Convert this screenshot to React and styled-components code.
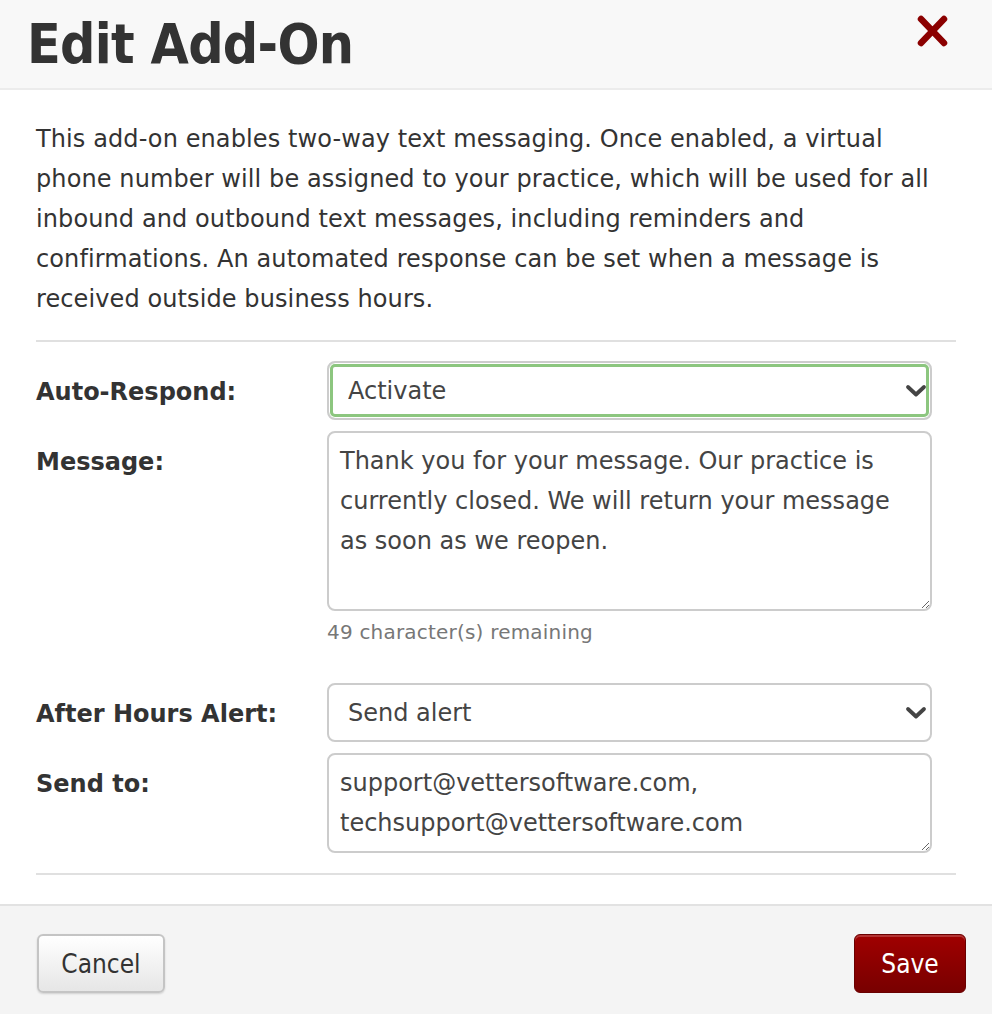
import React from 'react';
import styled, { createGlobalStyle } from 'styled-components';

const GlobalStyle = createGlobalStyle`
  html, body {
    margin: 0;
    padding: 0;
    background: #ffffff;
  }
  body {
    font-family: "DejaVu Sans", Verdana, sans-serif;
    color: #333333;
  }
`;

export default function App() {
  return (
    <>
      <GlobalStyle />
      <Modal>
        <Header>
          <Title>Edit Add-On</Title>
          <CloseButton aria-label="Close">
            <svg width="34" height="34" viewBox="0 0 34 34">
              <path d="M5 5 L28 29 M28 5 L5 29" stroke="#8b0000" strokeWidth="6.5" strokeLinecap="round" />
            </svg>
          </CloseButton>
        </Header>

        <Body>
          <Intro>
            This add-on enables two-way text messaging. Once enabled, a virtual
            phone number will be assigned to your practice, which will be used for all
            inbound and outbound text messages, including reminders and
            confirmations. An automated response can be set when a message is
            received outside business hours.
          </Intro>

          <Divider />

          <Form>
            <Row>
              <Label>Auto-Respond:</Label>
              <Field>
                <Select defaultValue="activate" $focused>
                  <option value="activate">Activate</option>
                  <option value="deactivate">Deactivate</option>
                </Select>
                <Chevron />
              </Field>
            </Row>

            <Row>
              <Label>Message:</Label>
              <Field>
                <TextArea
                  $height={180}
                  defaultValue="Thank you for your message. Our practice is currently closed. We will return your message as soon as we reopen."
                />
                <Hint>49 character(s) remaining</Hint>
              </Field>
            </Row>

            <Row $top={27}>
              <Label>After Hours Alert:</Label>
              <Field>
                <Select defaultValue="send">
                  <option value="send">Send alert</option>
                  <option value="none">Don't send</option>
                </Select>
                <Chevron />
              </Field>
            </Row>

            <Row>
              <Label>Send to:</Label>
              <Field>
                <TextArea
                  $height={100}
                  defaultValue={'support@vettersoftware.com,\ntechsupport@vettersoftware.com'}
                />
              </Field>
            </Row>
          </Form>

          <Divider $top={20} />
        </Body>

        <Footer>
          <CancelButton>Cancel</CancelButton>
          <SaveButton>Save</SaveButton>
        </Footer>
      </Modal>
    </>
  );
}

function Chevron() {
  return (
    <ChevronIcon width="22" height="14" viewBox="0 0 22 14">
      <path d="M3 3 L11 10.5 L19 3" fill="none" stroke="#444" strokeWidth="3.8" strokeLinecap="round" strokeLinejoin="round" />
    </ChevronIcon>
  );
}

const Modal = styled.div`
  width: 992px;
  min-height: 1014px;
  display: flex;
  flex-direction: column;
  background: #ffffff;
`;

const Header = styled.div`
  height: 88px;
  display: flex;
  align-items: center;
  justify-content: space-between;
  padding: 0 42px 0 27px;
  background: #f8f8f8;
  border-bottom: 2px solid #ececec;
`;

const Title = styled.h1`
  margin: 0;
  font-family: "DejaVu Sans Condensed", "DejaVu Sans", sans-serif;
  font-stretch: condensed;
  font-weight: bold;
  font-size: 55px;
  letter-spacing: -0.7px;
  color: #333333;
`;

const CloseButton = styled.button`
  display: flex;
  align-items: center;
  justify-content: center;
  margin-top: -26px;
  padding: 0;
  border: 0;
  background: transparent;
  cursor: pointer;
`;

const Body = styled.div`
  padding: 29px 36px 29px;
`;

const Intro = styled.p`
  margin: 0;
  font-size: 24px;
  line-height: 40px;
  letter-spacing: 0.1px;
  color: #333333;
`;

const Divider = styled.hr`
  display: block;
  height: 0;
  margin: ${(p) => p.$top ?? 21}px 0 0;
  border: 0;
  border-top: 2px solid #e0e0e0;
`;

const Form = styled.div`
  display: flex;
  flex-direction: column;
  gap: 11px;
  padding-top: 19px;
`;

const Row = styled.div`
  display: grid;
  grid-template-columns: 291px 1fr;
  align-items: start;
  margin-top: ${(p) => p.$top ?? 0}px;
`;

const Label = styled.label`
  padding-top: 16px;
  font-size: 24px;
  font-weight: bold;
  line-height: 30px;
  color: #333333;
`;

const Field = styled.div`
  position: relative;
  width: 605px;
`;

const Select = styled.select`
  width: 100%;
  height: 59px;
  box-sizing: border-box;
  padding: 0 48px 0 19px;
  appearance: none;
  -webkit-appearance: none;
  font-family: "DejaVu Sans", Verdana, sans-serif;
  font-size: 24px;
  color: #444444;
  background: #ffffff;
  border: 2px solid #cccccc;
  border-radius: 8px;
  outline: none;
  box-shadow: ${(p) => (p.$focused ? 'inset 0 0 0 1px #ffffff, inset 0 0 0 4px #8cc67f' : 'none')};
`;

const ChevronIcon = styled.svg`
  position: absolute;
  top: 23px;
  right: 5px;
  pointer-events: none;
`;

const TextArea = styled.textarea`
  display: block;
  width: 100%;
  height: ${(p) => p.$height}px;
  box-sizing: border-box;
  padding: 8px 11px;
  font-family: "DejaVu Sans", Verdana, sans-serif;
  font-size: 24px;
  line-height: 40px;
  color: #444444;
  background: #ffffff;
  border: 2px solid #cccccc;
  border-radius: 8px;
  outline: none;
  resize: vertical;
`;

const Hint = styled.div`
  margin-top: 8px;
  font-size: 20px;
  line-height: 26px;
  letter-spacing: 0.2px;
  color: #777777;
`;

const Footer = styled.div`
  flex: 1;
  display: flex;
  justify-content: space-between;
  align-items: flex-start;
  padding: 28px 26px 0 37px;
  background: #f4f4f4;
  border-top: 2px solid #e2e2e2;
`;

const BaseButton = styled.button`
  height: 59px;
  box-sizing: border-box;
  font-family: "DejaVu Sans Condensed", "DejaVu Sans", sans-serif;
  font-stretch: condensed;
  font-size: 26px;
  border-radius: 6px;
  cursor: pointer;
`;

const CancelButton = styled(BaseButton)`
  width: 128px;
  color: #333333;
  background: linear-gradient(#ffffff, #e6e6e6);
  border: 2px solid #c4c4c4;
  box-shadow: 0 1px 2px rgba(0, 0, 0, 0.15);
`;

const SaveButton = styled(BaseButton)`
  width: 112px;
  color: #ffffff;
  background: linear-gradient(#a00000, #780000);
  border: 1px solid #6a0000;
  box-shadow: inset 0 2px 0 rgba(255, 255, 255, 0.2);
`;
